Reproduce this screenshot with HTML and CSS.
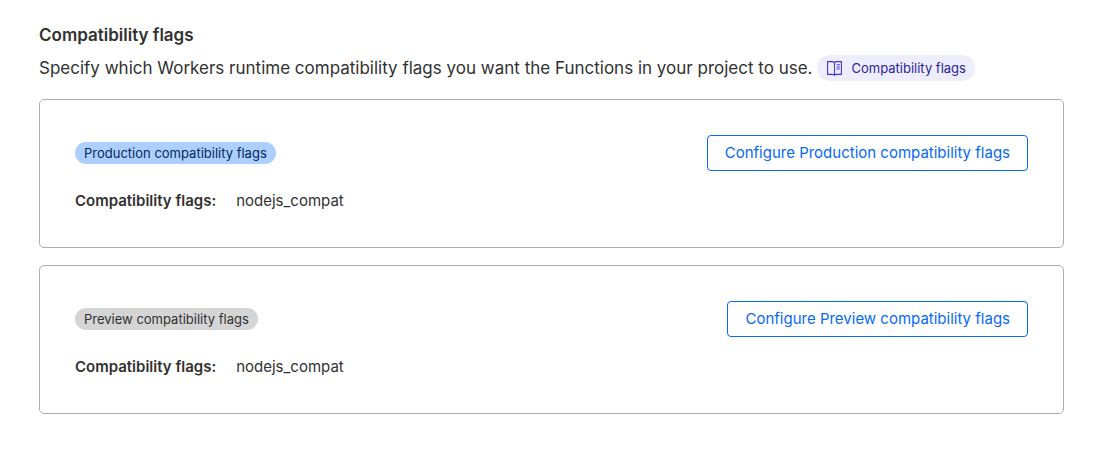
FILE: index.html
```html
<!DOCTYPE html>
<html lang="en">
<head>
<meta charset="utf-8">
<title>Compatibility flags</title>
<link rel="stylesheet" href="styles.css">
</head>
<body>
<main class="section">
  <header class="section-header">
    <h2 class="title">Compatibility flags</h2>
    <div class="description">
      <p class="description-text">Specify which Workers runtime compatibility flags you want the Functions in your project to use.</p>
      <a class="doc-link" href="#">
        <svg class="doc-icon" viewBox="0 0 16 16" aria-hidden="true"><path d="M8 2.500V14M8 2.500C7.500 1.800 7 1.500 6 1.500H1.500v12H6c1 0 1.500.2 2 .8.500-.6 1-.8 2-.8h4.500v-12H10C9 1.500 8.500 1.800 8 2.500M10 4.500h3M10 6.500h3M10 8.500h3"/></svg>
        <span>Compatibility flags</span>
      </a>
    </div>
  </header>
  <section class="card">
    <div class="card-top">
      <span class="badge badge-production">Production compatibility flags</span>
      <button class="configure" type="button">Configure Production compatibility flags</button>
    </div>
    <dl class="flags"><dt>Compatibility flags:</dt><dd>nodejs_compat</dd></dl>
  </section>
  <section class="card">
    <div class="card-top">
      <span class="badge badge-preview">Preview compatibility flags</span>
      <button class="configure" type="button">Configure Preview compatibility flags</button>
    </div>
    <dl class="flags"><dt>Compatibility flags:</dt><dd>nodejs_compat</dd></dl>
  </section>
</main>
</body>
</html>
```

FILE: styles.css
```css
* { box-sizing: border-box; }
body {
  margin: 0;
  background: #fff;
  color: #313131;
  font-family: Inter, "Liberation Sans", sans-serif;
  font-size: 15px;
  line-height: 20px;
}
.section {
  display: flex;
  flex-direction: column;
  gap: 17px;
  padding: 24px 35px 34px 39px;
}
.section-header { padding-bottom: 1px; }
.title { margin: 0 0 9px; font-size: 17px; line-height: 22px; font-weight: 600; }
.description { display: flex; align-items: center; gap: 4px; }
.description-text { margin: 0; font-size: 17px; line-height: 26px; }
.doc-link {
  display: flex;
  align-items: center;
  gap: 9px;
  height: 26px;
  padding: 0 9px;
  border-radius: 13px;
  background: #eeedfb;
  color: #2b1f9e;
  font-size: 13px;
  text-decoration: none;
  white-space: nowrap;
}
.doc-icon { width: 17px; height: 17px; fill: none; stroke: #4335dc; stroke-width: 1; }
.card { padding: 35px 35px 36px; border: 1px solid #adadad; border-radius: 5px; }
.card-top { display: flex; align-items: center; justify-content: space-between; margin-bottom: 20px; }
.badge { padding: 1px 9px; border-radius: 11px; font-size: 13px; }
.badge-production { background: #accfff; color: #04295a; }
.badge-preview { background: #d5d5d5; color: #313131; }
.configure {
  height: 36px;
  padding: 0 17px;
  border: 1px solid #056af5;
  border-radius: 4px;
  background: #fff;
  color: #056af5;
  font: inherit;
}
.flags { display: flex; gap: 20px; margin: 0; }
.flags dt { font-weight: 600; }
.flags dd { margin: 0; }
```
